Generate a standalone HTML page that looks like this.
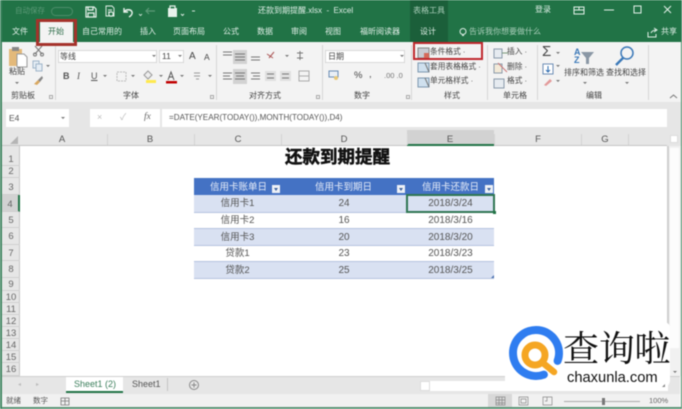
<!DOCTYPE html>
<html><head><meta charset="utf-8"><style>
html,body{margin:0;padding:0;background:#fff}
#p{position:relative;width:682px;height:409px;overflow:hidden;background:#fff;font-family:"Liberation Sans","Noto Sans CJK SC",sans-serif;font-size:8px;color:#444;filter:blur(.5px)}
#p div{position:absolute}
.t{position:absolute;white-space:nowrap;line-height:1}
.w{color:#dfeee6}
.tb{top:28px;font-size:8px}
.l{top:92px;font-size:8px}
.c{transform:translateX(-50%)}
.sep{width:1px;background:#d6d6d6;top:45px;height:55px}
.hd{background:#d4d4d4;width:1px;top:134px;height:11px}
.ch{top:135px;font-size:9.5px;color:#555}
.rl{position:absolute;left:2px;width:18px;text-align:center;font-size:9.5px;color:#666;border-bottom:1px solid #d0d0d0;box-sizing:border-box}
.fb{width:8px;height:8px;top:185px;background:#eef1f6;box-sizing:border-box}
.fb:after{content:"";position:absolute;left:2px;top:3px;border-left:2px solid transparent;border-right:2px solid transparent;border-top:3px solid #3b5f9e}
.cell{position:absolute;font-size:9.5px;color:#555;text-align:center;white-space:nowrap;line-height:16px}
.d{font-size:10px}
.dd{width:0;height:0;border-left:2px solid transparent;border-right:2px solid transparent;border-top:2.500px solid #777}
.dl{width:4px;height:4px;top:95px;border:1px solid #aaa;box-sizing:border-box}
</style></head><body><div id="p">
<!-- title + tabs -->
<div style="left:0;top:0;width:682px;height:42px;background:#217346"></div>
<div style="left:410px;top:0;width:38px;height:42px;background:#1b5f3a"></div>
<div class="t" style="left:15px;top:7px;font-size:7.5px;color:#5d9a78">自动保存</div>
<div style="left:51px;top:7px;width:20px;height:7px;border:1px solid #4d8d6a;border-radius:5px"></div>
<svg style="position:absolute;left:84px;top:4px" width="120" height="15" fill="none" stroke="#e8f2ec" stroke-width="1.2">
<path d="M2 3h8l2 2v8H2zM4 3v3h5V3M4 13V9h6v4"/>
<path d="M22 2h6l2 2v8h-8zM24 6h4M24 8h3" stroke-width=".9"/><circle cx="27" cy="10" r="2.200"/>
<path d="M40 4v4h4M40 8c2-3 7-3 8 0 .6 2-1 4-3 5" stroke-width="1.400"/>
<path d="M55 10l1.500 1.500L58 10" stroke-width=".8"/>
<path d="M63 7h8M65 4l-3 3 3 3" stroke="#5d9a78"/>
<path d="M84 4h9v9h-9z" fill="#e8f2ec" stroke="none"/><path d="M86 2h5v3h-5z" fill="#217346" stroke="#e8f2ec"/>
<path d="M97 10l1.500 1.500L100 10" stroke-width=".9"/><path d="M108 7h3" stroke-width=".9"/>
</svg>
<div class="t w" style="left:258px;top:7px;font-size:8px">还款到期提醒.xlsx&nbsp; -&nbsp; Excel</div>
<div class="t" style="left:413px;top:7px;font-size:8px;color:#a9cdb9">表格工具</div>
<div class="t w" style="left:535px;top:6px;font-size:8px">登录</div>
<svg style="position:absolute;left:572px;top:3px" width="105" height="14" fill="none" stroke="#e3f0e9" stroke-width="1">
<path d="M2 4h10v7H2zM7 4v3M2 7h10"/><path d="M32 7h10"/><path d="M62 3h7v7h-7z"/><path d="M92 3l7 7M99 3l-7 7"/>
</svg>
<div style="left:40px;top:21px;width:33px;height:23px;background:#f3f3f3"></div>
<div class="t w tb" style="left:12px">文件</div>
<div class="t tb" style="left:48px;color:#2a6a46">开始</div>
<div class="t w tb" style="left:82px">自己常用的</div>
<div class="t w tb" style="left:140px">插入</div>
<div class="t w tb" style="left:173px">页面布局</div>
<div class="t w tb" style="left:223px">公式</div>
<div class="t w tb" style="left:257px">数据</div>
<div class="t w tb" style="left:291px">审阅</div>
<div class="t w tb" style="left:325px">视图</div>
<div class="t w tb" style="left:360px">福昕阅读器</div>
<div class="t w tb" style="left:420px">设计</div>
<div class="t tb" style="left:469px;color:#a9cdb9">告诉我你想要做什么</div>
<svg style="position:absolute;left:458px;top:27px" width="10" height="11" fill="none" stroke="#dfeee6"><circle cx="5" cy="4.500" r="3"/><path d="M4 8.500h2"/></svg>
<svg style="position:absolute;left:646px;top:27px" width="12" height="11" fill="none" stroke="#dfeee6"><path d="M2 5v5h8V7M5 6c1-2 3-3 5-3M8 1l3 2-3 2"/></svg>
<div class="t w tb" style="left:661px">共享</div>
<!-- ribbon -->
<div style="left:0;top:42px;width:682px;height:60px;background:#f3f3f3"></div>
<div style="left:0;top:102px;width:682px;height:28px;background:#e6e6e6"></div>
<div class="sep" style="left:55px"></div><div class="sep" style="left:216px"></div><div class="sep" style="left:322px"></div><div class="sep" style="left:411px"></div><div class="sep" style="left:487px"></div><div class="sep" style="left:537px"></div><div class="sep" style="left:648px"></div>
<!-- clipboard -->
<svg style="position:absolute;left:6px;top:45px" width="46" height="42" fill="none">
<rect x="3" y="4" width="13" height="17" fill="#e3b97a"/><rect x="6" y="2" width="7" height="4" fill="#888"/><path d="M11 9h7l3 3v10H11z" fill="#fff" stroke="#999"/>
<path d="M29 9l7-8M36 9l-7-8" stroke="#777"/><circle cx="29" cy="9.500" r="1.500" stroke="#777"/><circle cx="36" cy="9.500" r="1.500" stroke="#777"/>
<rect x="27" y="16" width="6" height="7" stroke="#9fb5c9" fill="#e5edf4"/><rect x="30" y="19" width="6" height="7" stroke="#9fb5c9" fill="#e5edf4"/>
<path d="M28 39l4-4 2 2-3 3z" fill="#d9a860"/><path d="M32 35l4-4 1 2-3 4z" fill="#888"/>
</svg>
<div class="t" style="left:9px;top:68px;font-size:8px;color:#444">粘贴</div>
<div class="t l" style="left:11px">剪贴板</div>
<div class="dd" style="left:15px;top:82px"></div><div class="dd" style="left:46px;top:65px"></div>
<div class="dl" style="left:49px"></div><div class="dl" style="left:210px"></div><div class="dl" style="left:316px"></div><div class="dl" style="left:406px"></div>
<!-- font -->
<div style="left:58px;top:50px;width:99px;height:13px;background:#fff;border:1px solid #d8d8d8;box-sizing:border-box"></div>
<div style="left:159px;top:50px;width:25px;height:13px;background:#fff;border:1px solid #d8d8d8;box-sizing:border-box"></div>
<div class="t" style="left:60px;top:53px;font-size:8px">等线</div>
<div class="t" style="left:162px;top:52px;font-size:8.500px">11</div>
<div class="dd" style="left:152px;top:55px"></div><div class="dd" style="left:178px;top:55px"></div>
<div class="t" style="left:189px;top:52px;font-size:10px">A</div><div class="t" style="left:204px;top:53px;font-size:8.500px">A</div>
<div class="t" style="left:63px;top:72px;font-size:9px;font-weight:bold;color:#555">B</div>
<div class="t" style="left:77px;top:72px;font-size:9px;font-style:italic;font-family:'Liberation Serif',serif;color:#555">I</div>
<div class="t" style="left:91px;top:72px;font-size:9px;text-decoration:underline;color:#555">U</div>
<div class="dd" style="left:103px;top:75px"></div><div class="dd" style="left:131px;top:75px"></div><div class="dd" style="left:159px;top:75px"></div><div class="dd" style="left:180px;top:75px"></div><div class="dd" style="left:208px;top:75px"></div>
<svg style="position:absolute;left:116px;top:70px" width="95" height="15" fill="none">
<rect x="1" y="2" width="9" height="9" stroke="#bbb" stroke-dasharray="2 1"/>
<path d="M32 1l4 4-4 4-4-4z" fill="#eee" stroke="#999"/><rect x="30" y="10" width="10" height="3" fill="#ffe94d"/>
<path d="M52 10l3-8 3 8M53 7h4" stroke="#555"/><rect x="50" y="11" width="11" height="2.500" fill="#c00000"/>
<path d="M78 3h6M78 6h6M80 9h3" stroke="#999"/>
</svg>
<div class="t l" style="left:123px">字体</div>
<!-- align -->
<svg style="position:absolute;left:221px;top:48px" width="95" height="38" fill="none" stroke="#777">
<rect x="12" y="2" width="14" height="14" fill="#d2d2d2" stroke="none"/>
<path d="M2 4h9M2 7h9M14 6h10M14 9h10M14 12h10M30 9h9M30 12h9"/>
<path d="M46 6l6 4M48 10l5-6" stroke="#a55"/>
<path d="M79 3v9M76 5h6M76 10h6"/><rect x="12" y="21" width="14" height="15" fill="#d2d2d2" stroke="none"/>
<path d="M2 25h9M2 28h7M2 31h9M14 25h10M15 28h8M14 31h10M30 25h9M32 28h7M30 31h9"/>
<rect x="44" y="23" width="11" height="10" fill="#e0e0e0" stroke="none"/><rect x="59" y="23" width="11" height="10" fill="#e0e0e0" stroke="none"/>
<path d="M46 26h7M46 30h7M61 26h7M61 30h7"/><rect x="78" y="23" width="10" height="10" stroke="#aaa"/><path d="M78 28h10" stroke="#aaa"/>
</svg>
<div class="dd" style="left:285px;top:55px"></div>
<div class="t l" style="left:249px">对齐方式</div>
<!-- number -->
<div style="left:325px;top:50px;width:80px;height:13px;background:#fff;border:1px solid #d8d8d8;box-sizing:border-box"></div>
<div class="t" style="left:328px;top:53px;font-size:8px">日期</div>
<div class="dd" style="left:400px;top:55px"></div>
<svg style="position:absolute;left:328px;top:70px" width="13" height="11" fill="none"><rect x="1" y="1" width="9" height="6" stroke="#6b8db5" fill="#e9eff6"/><circle cx="8" cy="8" r="2" fill="#e8c878"/></svg>
<div class="t" style="left:354px;top:71px;font-size:9.500px">%</div>
<div class="t" style="left:369px;top:70px;font-size:9.500px">,</div>
<div class="t" style="left:384px;top:72px;font-size:7.500px;color:#777">.00 .0</div>
<div class="t l" style="left:354px">数字</div>
<!-- styles -->
<svg style="position:absolute;left:417px;top:46px" width="15" height="44" fill="none">
<rect x="1" y="2" width="11" height="10" fill="#c8ccd4" stroke="#888"/><path d="M7 7h5v5H7z" fill="#d46a5a"/>
<rect x="1" y="17" width="11" height="9" fill="#cfe0ee" stroke="#7d98b0"/><path d="M8 17l4 9" stroke="#777"/>
<rect x="1" y="32" width="11" height="9" fill="#cfe0ee" stroke="#7d98b0"/><path d="M8 32l4 9" stroke="#777"/>
</svg>
<div class="t" style="left:430px;top:48px;font-size:7.700px;color:#444">条件格式 ·</div>
<div class="t" style="left:430px;top:63px;font-size:7.700px;color:#444">套用表格格式 ·</div>
<div class="t" style="left:430px;top:77px;font-size:7.700px;color:#444">单元格样式 ·</div>
<div class="t l" style="left:444px">样式</div>
<div style="left:413px;top:42px;width:70px;height:18px;border:2px solid #c0272d;box-sizing:border-box"></div>
<div style="left:36px;top:19px;width:41px;height:27px;border:3px solid #a5322b;box-sizing:border-box"></div>
<!-- cells -->
<svg style="position:absolute;left:493px;top:46px" width="16" height="44" fill="none" stroke="#8a9aaa">
<rect x="1" y="3" width="8" height="9" fill="#e6ebf0"/><path d="M9 7h6" stroke="#7a9a7a"/><rect x="1" y="18" width="8" height="9" fill="#f3ead8"/><path d="M5 17l9 9" stroke="#c77"/><rect x="1" y="33" width="10" height="9" fill="#e6ebf0"/>
</svg>
<div class="t" style="left:507px;top:48px;font-size:7.700px">插入 ·</div>
<div class="t" style="left:507px;top:63px;font-size:7.700px">删除 ·</div>
<div class="t" style="left:507px;top:77px;font-size:7.700px">格式 ·</div>
<div class="t l" style="left:503px">单元格</div>
<!-- editing -->
<div class="t" style="left:542px;top:44px;font-size:15px;color:#444">Σ</div>
<svg style="position:absolute;left:542px;top:63px" width="14" height="26" fill="none"><rect x="1" y="1" width="10" height="10" stroke="#6b8db5" fill="#fff"/><path d="M6 3v6M4 7l2 2 2-2" stroke="#2d6bb0"/><path d="M2 22l6-6 2 2-6 5z" fill="#e39a9a"/></svg>
<div class="dd" style="left:556px;top:52px"></div><div class="dd" style="left:556px;top:65px"></div><div class="dd" style="left:556px;top:80px"></div>
<svg style="position:absolute;left:572px;top:47px" width="24" height="22"><path d="M9 5h13l-5 6v6h-3v-6z" fill="#8a97a5"/></svg>
<div class="t" style="left:574px;top:48px;font-size:9px;color:#3a78b8;font-weight:bold;line-height:8px;width:8px">A<br>Z</div>
<svg style="position:absolute;left:614px;top:45px" width="22" height="22" fill="none" stroke="#3a78b8" stroke-width="1.500"><circle cx="13" cy="8" r="6"/><path d="M9 13l-7 7" stroke-width="2.400"/></svg>
<div class="t" style="left:564px;top:69px;font-size:8px">排序和筛选</div>
<div class="t" style="left:606px;top:69px;font-size:8px">查找和选择</div>
<div class="dd" style="left:583px;top:82px"></div><div class="dd" style="left:625px;top:82px"></div>
<div class="t l" style="left:586px">编辑</div>
<svg style="position:absolute;left:669px;top:93px" width="9" height="7" fill="none" stroke="#777"><path d="M1 5l3.500-3L8 5"/></svg>
<!-- formula bar -->
<div style="left:6px;top:109px;width:63px;height:18px;background:#fff"></div>
<div class="t" style="left:9px;top:114px;font-size:8.500px;color:#555">E4</div>
<div class="dd" style="left:61px;top:117px"></div>
<div style="left:90px;top:109px;width:70px;height:18px;background:#fff"></div>
<div class="t" style="left:97px;top:113px;font-size:9px;color:#bbb">×</div>
<div class="t" style="left:120px;top:113px;font-size:9px;color:#bbb">✓</div>
<div class="t" style="left:144px;top:113px;font-size:9.500px;font-style:italic;font-family:'Liberation Serif',serif;color:#666">fx</div>
<div style="left:162px;top:109px;width:505px;height:18px;background:#fff"></div>
<div class="t" style="left:169px;top:114px;font-size:8.100px;color:#555">=DATE(YEAR(TODAY()),MONTH(TODAY()),D4)</div>
<!-- headers -->
<div style="left:2px;top:130px;width:665px;height:16px;background:#e6e6e6;border-bottom:1px solid #c6c6c6;box-sizing:border-box"></div>
<div style="left:2px;top:146px;width:18px;height:230px;background:#e6e6e6;border-right:1px solid #c6c6c6;box-sizing:border-box"></div>
<div style="left:10px;top:136px;width:0;height:0;border-left:8px solid transparent;border-bottom:8px solid #b5b5b5"></div>
<div style="left:407px;top:130px;width:87px;height:16px;background:#d2d2d2;border-bottom:2px solid #217346;box-sizing:border-box"></div>
<div class="hd" style="left:107px"></div><div class="hd" style="left:194px"></div><div class="hd" style="left:281px"></div><div class="hd" style="left:407px"></div><div class="hd" style="left:494px"></div><div class="hd" style="left:581px"></div><div class="hd" style="left:628px"></div>
<div class="t c ch" style="left:62px">A</div>
<div class="t c ch" style="left:150px">B</div>
<div class="t c ch" style="left:238px">C</div>
<div class="t c ch" style="left:344px">D</div>
<div class="t c ch" style="left:450px">E</div>
<div class="t c ch" style="left:538px">F</div>
<div class="t c ch" style="left:605px">G</div>
<div class="rl" style="top:146px;height:20px;line-height:28px">1</div>
<div class="rl" style="top:166px;height:12px;line-height:12px">2</div>
<div class="rl" style="top:178px;height:17px;line-height:19px">3</div>
<div class="rl" style="top:195px;height:17px;line-height:19px;background:#d2d2d2;border-right:2px solid #217346">4</div>
<div class="rl" style="top:212px;height:16px;line-height:17px">5</div>
<div class="rl" style="top:228px;height:17px;line-height:18px">6</div>
<div class="rl" style="top:245px;height:16px;line-height:17px">7</div>
<div class="rl" style="top:261px;height:17px;line-height:18px">8</div>
<div class="rl" style="top:278px;height:13px;line-height:14px">9</div>
<div class="rl" style="top:291px;height:12px;line-height:13px">10</div>
<div class="rl" style="top:303px;height:12px;line-height:13px">11</div>
<div class="rl" style="top:315px;height:12px;line-height:13px">12</div>
<div class="rl" style="top:327px;height:12px;line-height:13px">13</div>
<div class="rl" style="top:339px;height:12px;line-height:13px">14</div>
<div class="rl" style="top:351px;height:12px;line-height:13px">15</div>
<div class="rl" style="top:363px;height:13px;line-height:14px">16</div>
<!-- title -->
<div class="t" style="left:285px;top:149px;font-size:17.500px;font-weight:bold;color:#111;-webkit-text-stroke:.5px #111">还款到期提醒</div>
<!-- table -->
<div style="left:194px;top:178px;width:300px;height:17px;background:#4472c4"></div>
<div style="left:194px;top:195px;width:300px;height:17px;background:#d9e1f2"></div>
<div style="left:194px;top:228px;width:300px;height:17px;background:#d9e1f2"></div>
<div style="left:194px;top:261px;width:300px;height:17px;background:#d9e1f2"></div>
<div style="left:194px;top:212px;width:300px;height:1px;background:#b4c3df"></div>
<div style="left:194px;top:228px;width:300px;height:1px;background:#b4c3df"></div>
<div style="left:194px;top:245px;width:300px;height:1px;background:#b4c3df"></div>
<div style="left:194px;top:261px;width:300px;height:1px;background:#b4c3df"></div>
<div style="left:194px;top:277.500px;width:300px;height:1px;background:#b4c3df"></div>
<div class="t" style="left:210px;top:183px;font-size:9.500px;color:#e6ecf8">信用卡账单日</div>
<div class="t" style="left:315px;top:183px;font-size:9.500px;color:#e6ecf8">信用卡到期日</div>
<div class="t" style="left:422px;top:183px;font-size:9.500px;color:#e6ecf8">信用卡还款日</div>
<div class="fb" style="left:272px"></div><div class="fb" style="left:397px"></div><div class="fb" style="left:485px"></div>
<div class="cell" style="left:194px;top:196px;width:87px">信用卡1</div><div class="cell d" style="left:281px;top:196px;width:126px">24</div><div class="cell d" style="left:407px;top:196px;width:87px">2018/3/24</div>
<div class="cell" style="left:194px;top:213px;width:87px">信用卡2</div><div class="cell d" style="left:281px;top:213px;width:126px">16</div><div class="cell d" style="left:407px;top:213px;width:87px">2018/3/16</div>
<div class="cell" style="left:194px;top:230px;width:87px">信用卡3</div><div class="cell d" style="left:281px;top:230px;width:126px">20</div><div class="cell d" style="left:407px;top:230px;width:87px">2018/3/20</div>
<div class="cell" style="left:194px;top:246px;width:87px">贷款1</div><div class="cell d" style="left:281px;top:246px;width:126px">23</div><div class="cell d" style="left:407px;top:246px;width:87px">2018/3/23</div>
<div class="cell" style="left:194px;top:263px;width:87px">贷款2</div><div class="cell d" style="left:281px;top:263px;width:126px">25</div><div class="cell d" style="left:407px;top:263px;width:87px">2018/3/25</div>
<div style="left:406px;top:194px;width:89px;height:19px;border:2px solid #2f7653;box-sizing:border-box"></div>
<div style="left:492.500px;top:210.500px;width:3px;height:3px;background:#217346"></div>
<div style="left:491px;top:275px;width:0;height:0;border-left:3px solid transparent;border-bottom:3px solid #4a6fae"></div>
<!-- scrollbar -->
<div style="left:667px;top:130px;width:14px;height:16px;background:#e6e6e6"></div>
<div style="left:667px;top:146px;width:14px;height:230px;background:#f1f1f1;border-left:2px solid #cfcfcf;box-sizing:border-box"></div>
<div style="left:670px;top:135px;width:8px;height:8px;background:#fff;border:1px solid #ddd;box-sizing:border-box"></div>
<div style="left:670px;top:148px;width:9px;height:200px;background:#fcfcfc"></div>
<div class="dd" style="left:673px;top:371px"></div>
<!-- sheet tabs -->
<div style="left:2px;top:376px;width:678px;height:18px;background:#e6e6e6;border-top:1px solid #cfcfcf;box-sizing:border-box"></div>
<div class="t" style="left:18px;top:382px;font-size:6px;color:#bbb">◂</div><div class="t" style="left:36px;top:382px;font-size:6px;color:#bbb">▸</div>
<div style="left:66px;top:377px;width:57px;height:16px;background:#fff;border-bottom:2px solid #217346;box-sizing:border-box"></div>
<div class="t" style="left:74px;top:380px;font-size:9px;color:#3c7f5c">Sheet1 (2)</div>
<div class="t" style="left:132px;top:380px;font-size:9px;color:#555">Sheet1</div>
<div style="left:167px;top:378px;width:1px;height:13px;background:#c4c4c4"></div>
<svg style="position:absolute;left:188px;top:379px" width="12" height="12" fill="none" stroke="#888"><circle cx="6" cy="6" r="4.500"/><path d="M6 3.500v5M3.500 6h5"/></svg>
<div style="left:420px;top:381px;width:10px;height:10px;background:#fff;border:1px solid #ddd;box-sizing:border-box"></div>
<div style="left:430px;top:381px;width:238px;height:10px;background:#fff"></div>
<!-- status -->
<div style="left:2px;top:394px;width:678px;height:13px;background:#f1f1f1"></div>
<div style="left:0;top:407px;width:682px;height:2px;background:#5a9375"></div>
<div style="left:0;top:0;width:1.500px;height:409px;background:#3f8560"></div>
<div style="left:680.500px;top:0;width:1.500px;height:409px;background:#3f8560"></div>
<div class="t" style="left:6px;top:397px;font-size:7.500px;color:#555">就绪</div>
<div class="t" style="left:33px;top:397px;font-size:7.500px;color:#555">数字</div>
<svg style="position:absolute;left:60px;top:396px" width="10" height="10" fill="none" stroke="#777"><path d="M1 2h8v7H1zM1 5h8M5 2v7" stroke-width=".8"/></svg>
<div style="left:488px;top:394px;width:24px;height:13px;background:#d8d8d8"></div>
<svg style="position:absolute;left:495px;top:396px" width="60" height="10" fill="none" stroke="#888"><path d="M1 1h9v8H1zM1 4h9M1 7h9M4 1v8M7 1v8" stroke-width=".7"/><path d="M24 1h9v8h-9zM26 3h5v4h-5z" stroke-width=".7"/><path d="M48 1h9v8h-9zM52 1v4h-2" stroke-width=".7"/></svg>
<div style="left:564px;top:401px;width:76px;height:1px;background:#aaa"></div>
<div style="left:602px;top:398px;width:3px;height:7px;background:#777"></div>
<div class="t" style="left:649px;top:397px;font-size:7.500px;color:#666">100%</div>
<!-- watermark -->
<div style="left:505px;top:322px;width:165px;height:66px;background:#fff;border-bottom-right-radius:8px;border-top-right-radius:6px"></div>
<svg style="position:absolute;left:500px;top:320px" width="70" height="62" fill="none">
<path d="M57.600 40.900A23 23 0 1 0 43.900 54.600" stroke="#2f7df0" stroke-width="8" stroke-linecap="round"/>
<circle cx="35" cy="35" r="10" stroke="#f5a623" stroke-width="7"/>
<path d="M43 43l11 9" stroke="#f5a623" stroke-width="6.500" stroke-linecap="round"/>
</svg>
<div class="t" style="left:563px;top:329px;font-size:36px;color:#111;font-family:'Noto Serif CJK SC','Noto Sans CJK SC',serif;letter-spacing:-.3px">查询啦</div>
<div class="t" style="left:567px;top:371px;font-size:14.700px;color:#111">chaxunla.com</div>
<div style="left:662px;top:384px;width:0;height:0;border-left:3px solid transparent;border-bottom:3px solid #888"></div>
</div></body></html>
